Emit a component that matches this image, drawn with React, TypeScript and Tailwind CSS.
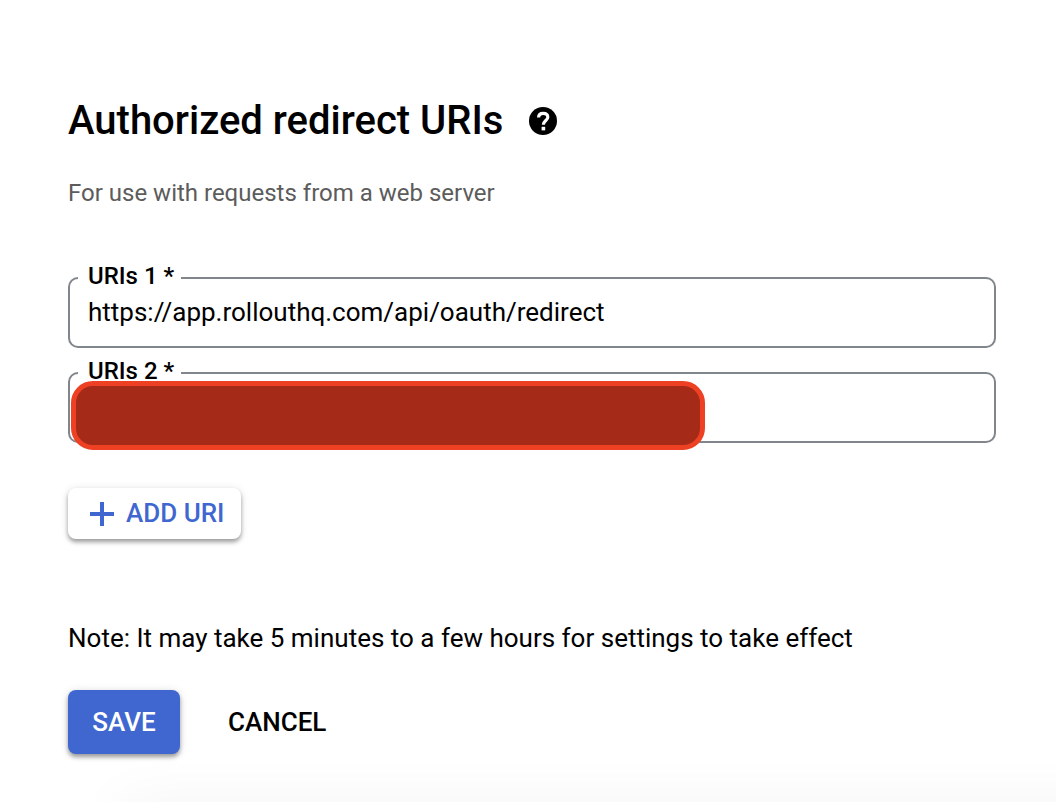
import React, { useState } from "react";

type UriFieldProps = {
  id: string;
  label: string;
  value: string;
  onChange: (value: string) => void;
  redacted?: boolean;
};

function UriField({ id, label, value, onChange, redacted = false }: UriFieldProps) {
  return (
    <div className="relative">
      <fieldset className="min-w-0 rounded-[10px] border-2 border-[#80868b] pb-2">
        <legend className="ml-2 pr-[7px] pb-1 pl-[10px] text-[24px] leading-6 font-medium">
          <label htmlFor={id}>{label}</label>
        </legend>
        <input
          id={id}
          type="text"
          required
          value={value}
          onChange={(event) => onChange(event.target.value)}
          className="block h-[46px] w-full bg-transparent px-[18px] pb-[6px] text-[26px] outline-none"
        />
      </fieldset>
      {redacted && (
        <div
          aria-hidden="true"
          className="absolute -bottom-[7px] left-[3px] h-[69px] w-[68.3%] rounded-[22px] border-5 border-[#ee4023] bg-[#a52a17]"
        />
      )}
    </div>
  );
}

export default function App() {
  const [uris, setUris] = useState<string[]>([
    "https://app.rollouthq.com/api/oauth/redirect",
    "",
  ]);

  const updateUri = (index: number, value: string) =>
    setUris((current) => current.map((uri, i) => (i === index ? value : uri)));

  return (
    <main className="flex min-h-screen flex-col bg-white font-['Roboto',sans-serif] text-black">
      <form className="pt-[97px] pr-15 pl-17" onSubmit={(event) => event.preventDefault()}>
        <div className="flex items-center gap-[26px]">
          <h1 className="text-[40px] leading-12 font-medium">Authorized redirect URIs</h1>
          <button type="button" aria-label="Help">
            <svg viewBox="0 0 28 28" className="size-7" aria-hidden="true">
              <circle cx="14" cy="14" r="14" fill="#000" />
              <path
                d="M9.6 10.6C9.6 7.8 11.4 6.3 14.2 6.3s4.6 1.4 4.6 3.9c0 3.2-4.4 3.6-4.4 7.6"
                fill="none"
                stroke="#fff"
                strokeWidth="3.2"
              />
              <path d="M12.6 19.8h3.6v3.6h-3.6z" fill="#fff" />
            </svg>
          </button>
        </div>
        <p className="mt-8 text-[24px] leading-8 text-[#5c5c5c]">
          For use with requests from a web server
        </p>

        <div className="mt-[55px] flex flex-col gap-[11px]">
          {uris.map((uri, index) => (
            <UriField
              key={index}
              id={`uri-${index + 1}`}
              label={`URIs ${index + 1} *`}
              value={uri}
              onChange={(value) => updateUri(index, value)}
              redacted={index === 1}
            />
          ))}
        </div>

        <button
          type="button"
          onClick={() => setUris((current) => [...current, ""])}
          className="mt-[45px] flex h-[51px] items-center gap-3 rounded-lg bg-white pr-[17px] pl-[22px] text-[26px] font-medium text-[#4067d0] shadow-[0_3px_4px_rgba(0,0,0,0.35),0_1px_10px_rgba(0,0,0,0.1)]"
        >
          <svg viewBox="0 0 24 24" className="size-6" fill="currentColor" aria-hidden="true">
            <path d="M10 0h4v10h10v4H14v10h-4V14H0v-4h10z" />
          </svg>
          ADD URI
        </button>

        <p className="mt-[83px] text-[26px] leading-8">
          Note: It may take 5 minutes to a few hours for settings to take effect
        </p>

        <div className="mt-9 flex items-center gap-6 text-[26px] font-medium">
          <button
            type="submit"
            className="h-16 min-w-28 rounded-lg bg-[#4067d0] px-6 text-white shadow-[0_3px_4px_rgba(0,0,0,0.35),0_1px_10px_rgba(0,0,0,0.12)]"
          >
            SAVE
          </button>
          <button type="button" className="h-16 px-6">
            CANCEL
          </button>
        </div>
      </form>

      <div className="mt-auto flex h-10 items-end overflow-hidden pl-15" aria-hidden="true">
        <div className="h-0 w-full shadow-[80px_24px_60px_20px_rgba(0,0,0,0.06)]" />
      </div>
    </main>
  );
}
